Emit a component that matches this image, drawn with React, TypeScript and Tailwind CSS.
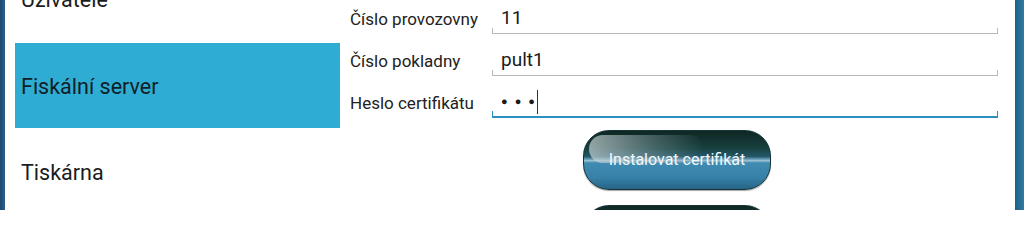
export default function App() {
  return (
    <div className="flex h-[210px] w-[1024px] overflow-hidden bg-white font-['Roboto',sans-serif]">
      {/* left edge */}
      <div className="w-[5px] shrink-0 bg-[linear-gradient(90deg,#1d4770,#2b5f88)]" />

      {/* menu */}
      <div className="-mt-[42px] flex w-[345px] shrink-0 flex-col pl-[10px] pr-[10px]">
        <div className="flex h-[85px] shrink-0 items-center px-[6px] text-[21.5px] text-[#1c1c1c]">Uživatelé</div>
        <div className="flex h-[85px] shrink-0 items-center bg-[#2facd3] px-[6px] pt-[4px] text-[21.5px] text-[#111d26]">
          Fiskální server
        </div>
        <div className="flex h-[86px] shrink-0 items-center px-[6px] pt-[4px] text-[21.5px] text-[#1c1c1c]">Tiskárna</div>
      </div>

      {/* form */}
      <div className="flex flex-1 flex-col pr-[17px]">
        <div className="-mt-[8px] flex flex-col">
          <Row label="Číslo provozovny" value="11" />
          <Row label="Číslo pokladny" value="pult1" />
          <Row label="Heslo certifikátu" value="•••" focused />
        </div>

        <div className="mt-[12px] flex flex-col items-center gap-[15px] pl-[6px]">
          <GlossyButton text="Instalovat certifikát" />
          <GlossyButton text="" />
        </div>
      </div>

      {/* right edge */}
      <div className="w-[9px] shrink-0 bg-[linear-gradient(90deg,#1f5f86,#2f7aa3)]" />
    </div>
  );
}

function Row({ label, value, focused }: { label: string; value: string; focused?: boolean }) {
  const tick = focused ? 'bg-[#2c8fbd]' : 'bg-[#b9b9b9]';
  return (
    <div className="flex h-[42px] shrink-0 items-end">
      <div className="w-[142px] shrink-0 pb-[2px] text-[17px] text-[#222]">{label}</div>
      <div
        className={
          'relative flex h-[34px] flex-1 items-center pl-[9px] pt-[3px] text-[19px] text-[#1a1a1a] ' +
          (focused ? 'border-b-2 border-[#2c8fbd]' : 'border-b border-[#b9b9b9]')
        }
      >
        {focused ? (
          <span className="flex items-center gap-[7px] text-[11px] leading-none">
            <span>●</span>
            <span>●</span>
            <span>●</span>
            <span className="ml-[-5px] h-[24px] w-px bg-[#333]" />
          </span>
        ) : (
          <span>{value}</span>
        )}
        <span className={'absolute bottom-0 left-0 h-[5px] w-px ' + tick} />
        <span className={'absolute bottom-0 right-0 h-[5px] w-px ' + tick} />
      </div>
    </div>
  );
}

function GlossyButton({ text }: { text: string }) {
  return (
    <div className="relative flex h-[60px] w-[188px] shrink-0 items-center justify-center overflow-hidden rounded-[26px] border border-[#17343a] bg-[linear-gradient(180deg,#0e2723_0%,#17403f_30%,#23596a_44%,#6fa2bb_49%,#9cc2d3_51%,#3f8bb1_55%,#3781a9_80%,#266486_100%)] shadow-[0_1px_1px_rgba(0,0,0,0.35)]">
      <span className="absolute left-[5px] top-[4px] h-[28px] w-[115px] rounded-[20px] bg-[linear-gradient(90deg,rgba(200,210,212,0.7),rgba(160,180,185,0.35)_55%,rgba(60,90,95,0)_100%)]" />
      <span className="relative text-[16px] text-[#f4f8fa]">{text}</span>
    </div>
  );
}
